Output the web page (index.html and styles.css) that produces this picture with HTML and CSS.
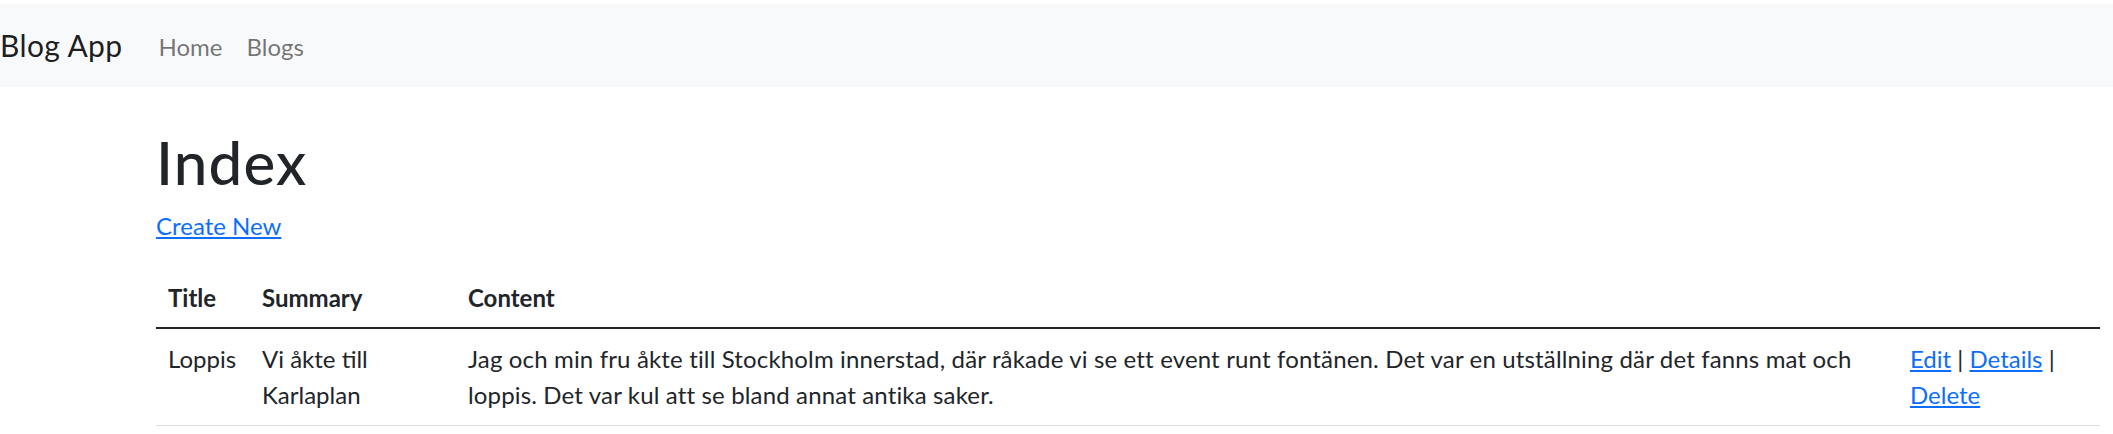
FILE: index.html
```html
<!DOCTYPE html>
<html lang="sv">
<head>
<meta charset="utf-8">
<title>Index - Blog App</title>
<link rel="stylesheet" href="styles.css">
</head>
<body>
<header class="site-header">
  <nav class="navbar">
    <a class="navbar-brand" href="#">Blog App</a>
    <ul class="nav-list">
      <li><a class="nav-link" href="#">Home</a></li>
      <li><a class="nav-link" href="#">Blogs</a></li>
    </ul>
  </nav>
</header>
<main class="container">
  <h1 class="page-title">Index</h1>
  <p class="create"><a href="#">Create New</a></p>
  <table class="table">
    <colgroup>
      <col class="col-title">
      <col class="col-summary">
      <col class="col-content">
      <col class="col-actions">
    </colgroup>
    <thead>
      <tr>
        <th>Title</th>
        <th>Summary</th>
        <th>Content</th>
        <th></th>
      </tr>
    </thead>
    <tbody>
      <tr>
        <td>Loppis</td>
        <td>Vi åkte till Karlaplan</td>
        <td class="content-cell">Jag och min fru åkte till Stockholm innerstad, där råkade vi se ett event runt fontänen. Det var en utställning där det fanns mat och loppis. Det var kul att se bland annat antika saker.</td>
        <td><a href="#">Edit</a> | <a href="#">Details</a> | <a href="#">Delete</a></td>
      </tr>
    </tbody>
  </table>
</main>
</body>
</html>
```
FILE: styles.css
```css
html, body {
  margin: 0;
  padding: 0;
  background: #ffffff;
}

body {
  font-family: "Lato", "Liberation Sans", sans-serif;
  font-size: 24px;
  line-height: 1.5;
  color: #212529;
}

a {
  color: #0d6efd;
  text-decoration: underline;
}

.site-header {
  padding-top: 4px;
}

.navbar {
  display: flex;
  align-items: center;
  height: 83px;
  background: #f8f9fa;
  padding: 0;
}

.navbar-brand {
  font-size: 30px;
  line-height: 45px;
  color: rgba(0, 0, 0, 0.9);
  text-decoration: none;
  margin-right: 24px;
  letter-spacing: 0.4px;
  white-space: nowrap;
}

.nav-list {
  display: flex;
  list-style: none;
  margin: 0;
  padding: 0;
  padding-top: 2px;
}

.nav-link {
  display: block;
  padding: 0 12px;
  color: rgba(0, 0, 0, 0.55);
  text-decoration: none;
  line-height: 36px;
}

.container {
  padding: 39px 13px 0 156px;
}

.page-title {
  margin: 0 0 10px;
  font-size: 60px;
  font-weight: 500;
  line-height: 72px;
  letter-spacing: 1.2px;
}

.create {
  margin: 0 0 24px;
}

.table {
  width: 100%;
  border-collapse: collapse;
  table-layout: fixed;
}

.col-title { width: 94px; }
.col-summary { width: 206px; }
.col-content { width: 1442px; }
.col-actions { width: 202px; }

.table th,
.table td {
  padding: 12px;
  text-align: left;
  vertical-align: top;
}

.table th {
  font-weight: 700;
  padding-bottom: 11px;
  border-bottom: 2px solid #212529;
}

.table td {
  border-bottom: 1px solid #dee2e6;
}

.content-cell {
  letter-spacing: 0.15px;
}
```
